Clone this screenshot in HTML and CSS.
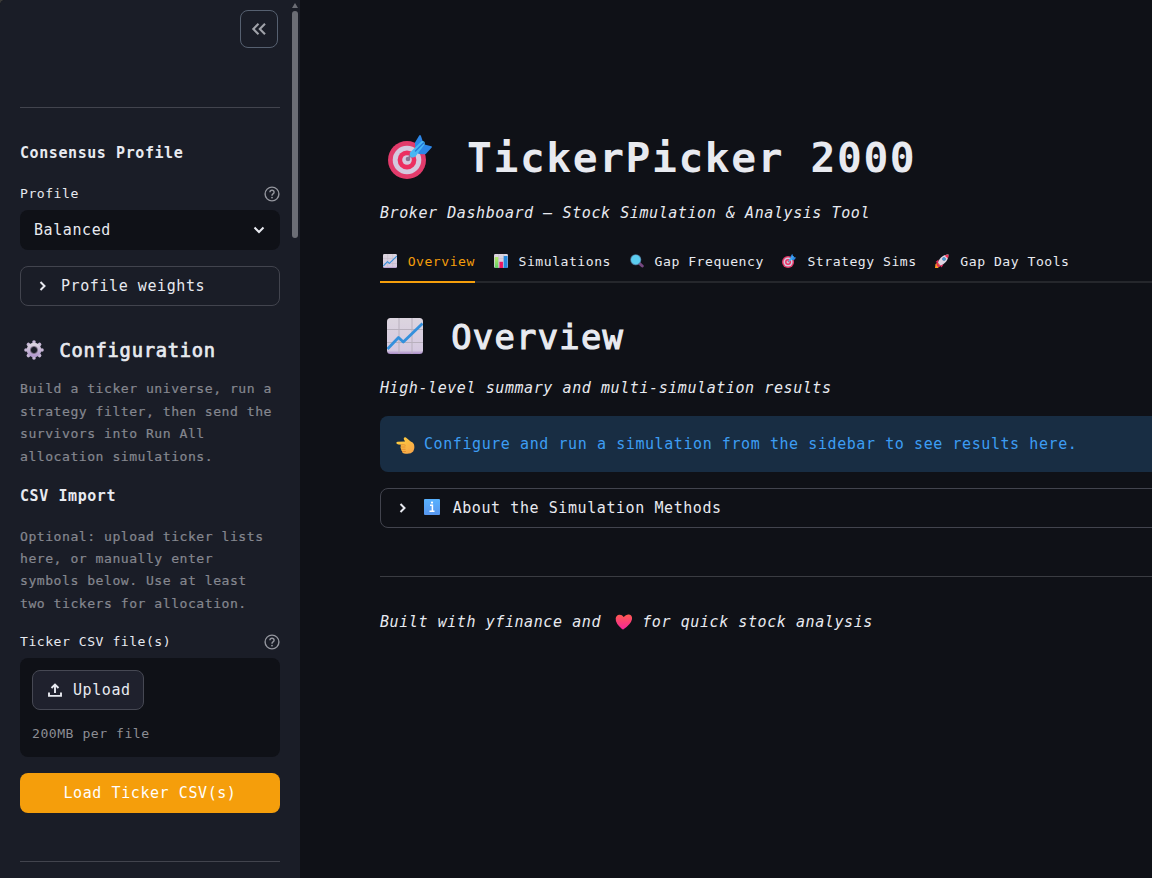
FILE: index.html
```html
<!DOCTYPE html>
<html lang="en">
<head>
<meta charset="utf-8">
<title>TickerPicker 2000</title>
<link rel="stylesheet" href="styles.css">
</head>
<body>
<svg class="defs" width="0" height="0" aria-hidden="true">
  <defs>
    <linearGradient id="paper" x1="0" y1="0" x2="0" y2="1"><stop offset="0" stop-color="#dcd5df"/><stop offset=".9" stop-color="#d5c9e0"/><stop offset="1" stop-color="#a98bc8"/></linearGradient>
    <linearGradient id="gold" x1="0" y1="0" x2="1" y2="1"><stop offset="0" stop-color="#ffd43d"/><stop offset="1" stop-color="#f5a04a"/></linearGradient>
    <linearGradient id="love" x1="0" y1="0" x2="0" y2="1"><stop offset="0" stop-color="#ff5a50"/><stop offset="1" stop-color="#f3259b"/></linearGradient>
    <linearGradient id="metal" x1="0" y1="0" x2="0" y2="1"><stop offset="0" stop-color="#d9d2de"/><stop offset="1" stop-color="#b49bce"/></linearGradient>
    <linearGradient id="sky" x1="0" y1="0" x2="0" y2="1"><stop offset="0" stop-color="#58b2ff"/><stop offset="1" stop-color="#5796ee"/></linearGradient>
    <linearGradient id="lime" x1="0" y1="0" x2="0" y2="1"><stop offset="0" stop-color="#b5e96b"/><stop offset="1" stop-color="#5fce62"/></linearGradient>
    <symbol id="chart" viewBox="0 0 36 36">
      <rect width="36" height="36" rx="3.5" fill="url(#paper)"/>
      <path d="M12 0v36M25 0v36M0 11.5h36M0 24.5h36" stroke="#b8b0bd" stroke-width="1"/>
      <path d="M.5 31 11.500 19.500l4.800 4.500L35.500 5.500" fill="none" stroke="#3490dc" stroke-width="2.800" stroke-linejoin="round"/>
    </symbol>
    <symbol id="bars" viewBox="0 0 36 36">
      <rect width="36" height="36" rx="3.5" fill="url(#paper)"/>
      <path d="M12 0v36M25 0v36M0 12h36" stroke="#b8b0bd"/>
      <path d="M2 8h9v28H4q-2 0-2-2z" fill="url(#lime)"/><path d="M14 20h9v16h-9z" fill="#ed1761"/><path d="M25 5h10v29q0 2-2 2h-8z" fill="#2687dc"/>
    </symbol>
    <symbol id="target" viewBox="0 0 44 44">
      <circle cx="19" cy="25" r="19" fill="#e23b6b"/><circle cx="19" cy="25" r="14.3" fill="#d4c9df"/><circle cx="19" cy="25" r="9.4" fill="#ec2f61"/><circle cx="19" cy="25" r="4.8" fill="#d4c9df"/><circle cx="20" cy="24" r="2.3" fill="#8a7391"/>
      <path d="m20 23.500 4-4" stroke="#8b7894" stroke-width="2"/>
      <path d="M27 11V7.500L31.200.4q1-.9 1.700.4L35 7l1.600 2.500 6.700 1.700q1.200.6.200 1.500L38 18.700q-.8.800-2 .5l-5.500-.2z" fill="#2c86e6"/>
      <path d="M22 17.500 33.500 6.300q1.600-.9 2.700.3 1.200 1.400.3 2.800L27.500 21.500q-2 1.700-4.700.8-1.900-1.900-.8-4.800z" fill="#47b7f2"/>
      <path d="m27.500 16 8-8" stroke="#2474d8" stroke-width="1.300" stroke-linecap="round"/>
    </symbol>
    <symbol id="search" viewBox="0 0 28 28">
      <path d="m18 18 6.500 6" stroke="#764780" stroke-width="6" stroke-linecap="round"/><circle cx="11.500" cy="11.500" r="11" fill="#4f789a"/><circle cx="11.500" cy="11.500" r="9.500" fill="#5bcdf0"/>
    </symbol>
    <symbol id="rocket" viewBox="0 0 28 28">
      <path d="M1 20 6 17l5 5-5 6H0z" fill="#ff9b20"/><path d="m7 11-6 5 6 3zm10 10-4 6-4-6zM4 17l7 8-5 1-3-4z" fill="#df285d"/>
      <path d="M6 17C9 7 17 1 27 1 27 11 21 19 11 23z" fill="#ddd5e3"/><path d="M19 3 27 1l-1 8z" fill="#ed2e51"/><circle cx="18" cy="10" r="3.5" fill="#25659d"/><circle cx="18" cy="10" r="2" fill="#49adf0"/>
    </symbol>
    <symbol id="gear" viewBox="0 0 20 20">
      <path d="M10 2v.1M10 17.900v.1M2 10h.1M17.900 10h.1M4.400 4.400l.1.100M15.500 15.500l.1.100M4.400 15.600l.1-.1M15.500 4.500l.1-.1" stroke="#c6b7d5" stroke-width="3.600" stroke-linecap="round"/>
      <circle cx="10" cy="10" r="5.300" fill="none" stroke="url(#metal)" stroke-width="4"/><circle cx="10" cy="10" r="3.600" fill="none" stroke="#786b80" stroke-width=".9"/>
    </symbol>
    <symbol id="hand" viewBox="0 0 19 18">
      <path d="M1.500 4.700Q0 5 .4 6.200q.3 1 2 1.200l2.900.3q-1.100.8-.4 1.900-.8 1.500.4 2.300-.5 1.700.7 2.200-.1 2 2 2.400 6.500 1.200 9.200-2 2-3.500.6-7.500-.8-2-3.100-2.600L10.500 1Q9.700-.3 8.300.4q-1.200 1 .2 3.200l.5.900z" fill="url(#gold)"/>
      <path d="M5.300 7.800q3-.4 4 .3M5 10h4M5.600 12.300h3.500M6.500 14.500h3" fill="none" stroke="#df8430" stroke-width=".8" stroke-linecap="round"/>
    </symbol>
    <symbol id="heart" viewBox="0 0 18 16"><path d="M7 15Q.3 9.500.7 4.600 1 1 4.500.7 7 .5 8.700 3 11.300 0 14 .6q3.500.8 3 4.600Q16 10 8.500 15.300 7.800 15.800 7 15z" fill="url(#love)"/></symbol>
    <symbol id="info" viewBox="0 0 16 16"><rect width="16" height="16" rx="1" fill="url(#sky)"/><path d="M6 6.200h2.400V12M5.500 12.300h5" fill="none" stroke="#fff" stroke-width="1.500"/><circle cx="8" cy="3.600" r="1.100" fill="#fff"/></symbol>
    <symbol id="help" viewBox="0 0 16 16"><g fill="none" stroke="currentColor" stroke-width="1.400"><circle cx="8" cy="8" r="6.900"/><path d="M5.900 6.300Q6 4.300 8 4.300t2.100 1.900Q10.100 7.200 9 7.900 8 8.600 8 9.700"/></g><circle cx="8" cy="11.600" r=".9" fill="currentColor"/></symbol>
    <symbol id="right" viewBox="0 0 8 12"><path d="m1.500 2 4 4-4 4" fill="none" stroke="currentColor" stroke-width="2"/></symbol>
  </defs>
</svg>
<div class="app">
  <aside class="sidebar">
    <div class="sidebar-header">
      <button class="collapse" aria-label="Collapse sidebar"><svg width="16" height="14" viewBox="0 0 16 14" fill="none" stroke="currentColor" stroke-width="2.100"><path d="M7.500 1.800 2.300 7l5.200 5.200M14 1.800 8.800 7l5.200 5.200"/></svg></button>
    </div>
    <hr>
    <h4 class="strong profile-title">Consensus Profile</h4>
    <div class="label-row profile-label"><span>Profile</span><svg class="help"><use href="#help"/></svg></div>
    <div class="select"><span>Balanced</span><svg width="12" height="8" viewBox="0 0 12 8"><path d="m1.500 1.500 4.500 4.500 4.500-4.500" fill="none" stroke="currentColor" stroke-width="2"/></svg></div>
    <div class="expander weights"><svg class="chevron"><use href="#right"/></svg><span>Profile weights</span></div>
    <h3 class="config"><span class="emoji"><svg class="gear"><use href="#gear"/></svg></span> Configuration</h3>
    <p class="caption">Build a ticker universe, run a<br>strategy filter, then send the<br>survivors into Run All<br>allocation simulations.</p>
    <h4 class="strong csv-title">CSV Import</h4>
    <p class="caption csv-caption">Optional: upload ticker lists<br>here, or manually enter<br>symbols below. Use at least<br>two tickers for allocation.</p>
    <div class="label-row csv-label"><span>Ticker CSV file(s)</span><svg class="help"><use href="#help"/></svg></div>
    <div class="uploader">
      <button class="upload"><svg width="14" height="14" viewBox="0 0 14 14" fill="none" stroke="currentColor" stroke-width="1.900"><path d="M7 10V1.500M3.500 5 7 1.500 10.500 5M1 9.500v3.400h12V9.500"/></svg><span>Upload</span></button>
      <span class="limit">200MB per file</span>
    </div>
    <button class="load">Load Ticker CSV(s)</button>
    <hr class="last-rule">
    <div class="scrollbar"><span class="arrow"></span><span class="thumb"></span></div>
  </aside>
  <main class="main">
    <div class="content">
      <h1><span class="emoji"><svg class="title-target"><use href="#target"/></svg></span> TickerPicker 2000</h1>
      <p class="lead subtitle">Broker Dashboard – Stock Simulation &amp; Analysis Tool</p>
      <nav class="tabs">
        <a class="tab active"><span class="emoji"><svg><use href="#chart"/></svg></span> Overview</a>
        <a class="tab"><span class="emoji"><svg><use href="#bars"/></svg></span> Simulations</a>
        <a class="tab"><span class="emoji"><svg><use href="#search"/></svg></span> Gap Frequency</a>
        <a class="tab"><span class="emoji"><svg><use href="#target"/></svg></span> Strategy Sims</a>
        <a class="tab"><span class="emoji"><svg><use href="#rocket"/></svg></span> Gap Day Tools</a>
      </nav>
      <h2><span class="emoji"><svg class="title-chart"><use href="#chart"/></svg></span> Overview</h2>
      <p class="lead">High-level summary and multi-simulation results</p>
      <div class="alert"><svg class="hand"><use href="#hand"/></svg><span>Configure and run a simulation from the sidebar to see results here.</span></div>
      <div class="expander about"><svg class="chevron"><use href="#right"/></svg><span><span class="emoji"><svg class="info"><use href="#info"/></svg></span> About the Simulation Methods</span></div>
      <hr class="footer-rule">
      <p class="lead footer">Built with yfinance and <span class="emoji"><svg class="heart"><use href="#heart"/></svg></span> for quick stock analysis</p>
    </div>
  </main>
</div>
</body>
</html>
```
FILE: styles.css
```css
* { box-sizing: border-box; letter-spacing: .0385em; }
html { background: #3a3a38; }
body {
  margin: 0;
  height: 878px;
  overflow: hidden;
  color: #e8eaf0;
  font: 15px/24px "DejaVu Sans Mono", monospace;
}
h1, h2, h3, h4, p { margin: 0; white-space: nowrap; }
button { font: inherit; padding: 0; color: inherit; }
svg { flex: none; }
.defs { position: absolute; }
hr { width: 100%; height: 1px; margin: 0; border: 0; background: #42444e; flex: none; }
.app { display: flex; height: 878px; border-top-left-radius: 5px; overflow: hidden; background: #0f1117; }

/* Emoji occupy a fixed advance relative to the text size */
.emoji { display: inline-flex; width: 1.47em; justify-content: center; vertical-align: middle; }

.sidebar {
  position: relative;
  flex: 0 0 300px;
  display: flex;
  flex-direction: column;
  padding: 0 20px;
  background: #1a1d27;
}
.sidebar-header { height: 107px; flex: none; display: flex; justify-content: flex-end; padding: 10px 2px 0; }
.collapse {
  width: 38px; height: 38px;
  display: flex; align-items: center; justify-content: center;
  border: 1px solid #566070; border-radius: 8px;
  background: none; color: #a0a2a9;
}
.strong { font-size: 15px; font-weight: 700; }
.profile-title { margin-top: 33px; }
.label-row { display: flex; justify-content: space-between; align-items: center; font-size: 13.125px; height: 24px; }
.profile-label { margin-top: 17px; }
.help { width: 16px; height: 16px; color: #94969e; }
.select {
  margin-top: 4px; height: 40px; padding: 0 15px 0 14px;
  display: flex; align-items: center; justify-content: space-between;
  border-radius: 8px; background: #0f1117;
}
.expander {
  display: flex; align-items: center; height: 40px; padding-left: 18px; gap: 14px;
  border: 1px solid #42444e; border-radius: 8px;
}
.chevron { width: 8px; height: 12px; }
.weights { margin-top: 16px; }
.config { margin-top: 33px; height: 23px; font-size: 18.75px; font-weight: 400; -webkit-text-stroke: .7px currentColor; }
.gear { width: 20px; height: 20px; margin-bottom: 3px; }
.caption { margin-top: 16.4px; font-size: 13.125px; line-height: 22.4px; color: #85878f; -webkit-text-stroke: .2px currentColor; }
.csv-title { margin-top: 16px; }
.csv-caption { margin-top: 17.6px; }
.csv-label { margin-top: 14.8px; }
.uploader { margin-top: 4px; height: 99px; padding: 12px; border-radius: 8px; background: #0f1117; display: flex; flex-direction: column; align-items: flex-start; }
.upload { flex: none; width: 112px; height: 40px; display: flex; align-items: center; gap: 11px; padding-left: 15px; border: 1px solid #464853; border-radius: 8px; background: #1f212d; }
.limit { margin-top: 12px; font-size: 13.125px; color: #8c8e94; }
.load { margin-top: 16px; height: 40px; border: 0; border-radius: 8px; background: #f59e0b; color: #fff; }
.last-rule { margin-top: 48px; }

.scrollbar { position: absolute; top: 3px; right: 2px; width: 6px; display: flex; flex-direction: column; gap: 3px; }
.arrow { height: 5px; background: #6b6d75; clip-path: polygon(50% 0, 100% 100%, 0 100%); }
.thumb { height: 227px; border-radius: 3px; background: #6b6d75; }

.main { flex: 1; min-width: 0; overflow: hidden; padding: 131px 0 0 80px; }
.content { width: 840px; display: flex; flex-direction: column; }
h1 { height: 54px; font-size: 41.25px; line-height: 54px; font-weight: 700; }
.title-target { width: 44px; height: 44px; margin-bottom: 9px; }
.lead { height: 24px; font-style: italic; }
.subtitle { margin-top: 16px; }
.tabs { display: flex; gap: 16px; margin-top: 16px; height: 42px; border-bottom: 2px solid #25272c; }
.tab { height: 42px; padding-top: 9px; font-size: 13.125px; white-space: nowrap; }
.tab svg { width: 14px; height: 14px; margin-bottom: 3px; }
.active { color: #f59e0b; border-bottom: 2px solid #f59e0b; }
h2 { margin-top: 33px; height: 43px; font-size: 33.75px; line-height: 44px; font-weight: 400; -webkit-text-stroke: 1.2px currentColor; }
.title-chart { width: 36px; height: 36px; margin-bottom: 8px; }
h2 + .lead { margin-top: 17px; }
.alert { margin-top: 16px; height: 56px; display: flex; align-items: center; gap: 9px; padding-left: 16px; border-radius: 8px; background: #182d43; color: #3d9df3; }
.hand { width: 19px; height: 18px; margin-top: 4px; }
.about { margin-top: 16px; }
.info { width: 16px; height: 16px; margin-bottom: 4px; }
.footer-rule { margin-top: 48px; background: #3a3c42; }
.footer { margin-top: 33px; }
.heart { width: 18px; height: 16px; margin: 0 0 2px 4px; }
```
